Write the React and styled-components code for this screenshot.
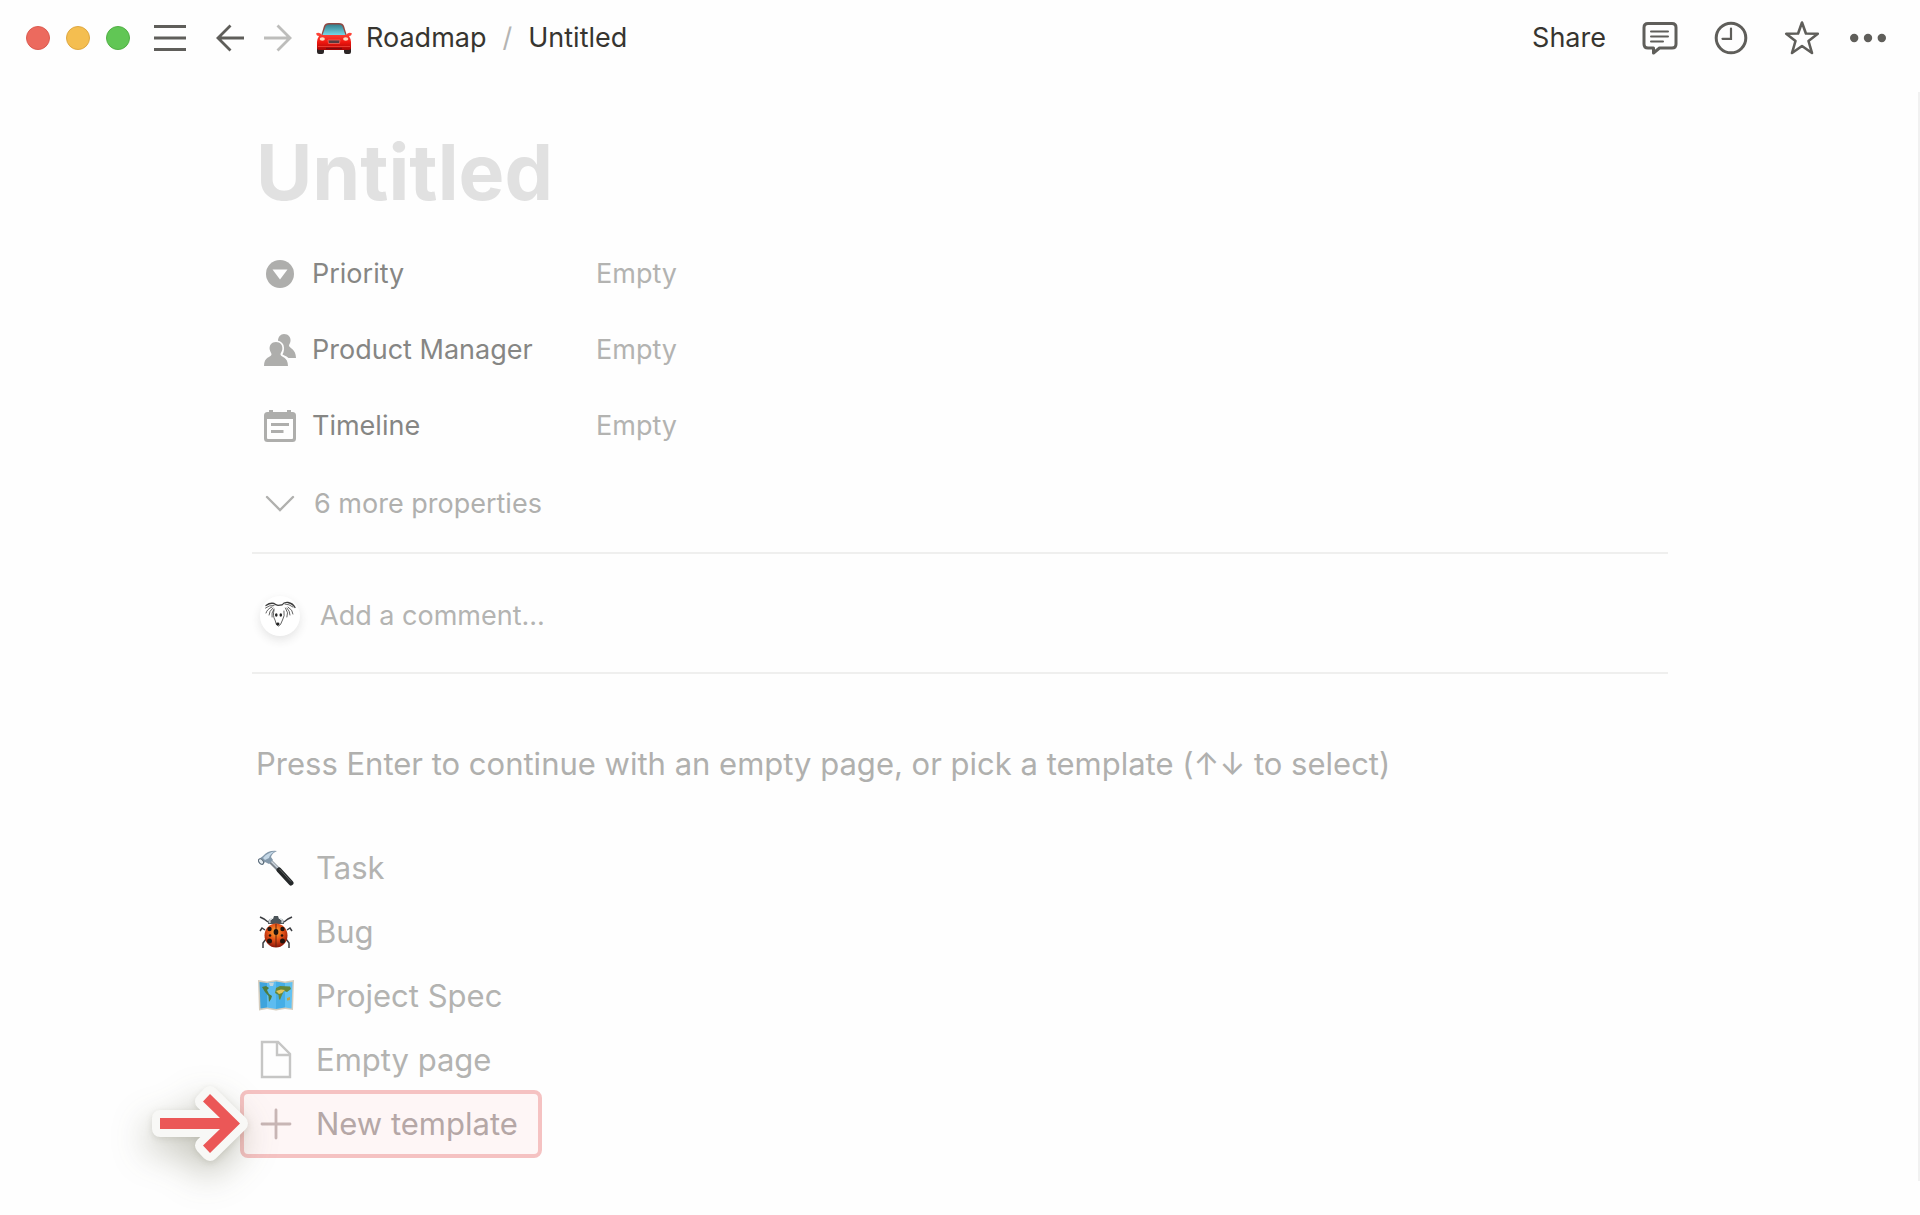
import React from 'react';
import styled, { createGlobalStyle } from 'styled-components';

const GlobalStyle = createGlobalStyle`
    *{ box-sizing: border-box; margin: 0; padding: 0; }

    body{
        background: #fefefe; color: #373530;
        font-family: Inter, "Liberation Sans", sans-serif;
        font-size: 27px; line-height: 36px;
    }

    button, input{ font: inherit; color: inherit; background: none; border: none; }
    button{ cursor: pointer; }
    a{ color: inherit; text-decoration: none; }
    svg{ display: block; flex: none; }
`;

const StyledPage = styled.div`
    min-height: 100vh;
    display: flex; flex-direction: column;
`;

const StyledTopbar = styled.header`
    display: flex; align-items: center;
    justify-content: space-between;
    height: 76px; padding: 0 34px 0 26px;
`;

const WindowControls = styled.div`
    display: flex; gap: 16px;
    margin-right: 24px;
`;

const WindowButton = styled.button`
    width: 24px; height: 24px;
    border-radius: 50%;
    background: ${({$fill}) => $fill};
    border: 1px solid ${({$edge}) => $edge};
`;

const TopbarGroup = styled.div`
    display: flex; align-items: center;
    gap: ${({$gap}) => $gap || 0}px;
`;

const IconButton = styled.button`
    color: ${({$muted}) => $muted ? '#bdbdbb' : '#5f5e5a'};
`;

const NavButtons = styled.div`
    display: flex; gap: 20px;
    margin: 0 24px 0 30px;
`;

const Breadcrumb = styled.nav`
    display: flex; align-items: center;

    a{ display: flex; align-items: center; gap: 14px; }
    span{ color: #b4b4b2; margin: 0 16px; }
`;

const ShareButton = styled.button``;

const StyledMain = styled.main`
    flex: 1;
    margin-top: 16px; margin-bottom: 34px;
    padding: 30px 250px 0 252px;
    border-right: 2px solid #f1f1f1;
`;

const Title = styled.h1`
    font-size: 77px; line-height: 100px; font-weight: 700;
    color: #e1e1e1; padding-left: 4px;
    margin-bottom: 14px;
`;

const PropertyList = styled.div`
    padding: 0 0 8px 12px;
`;

const PropertyRow = styled.div`
    display: flex; align-items: center;
    height: 76px;
`;

const PropertyName = styled.button`
    display: flex; align-items: center; gap: 16px;
    width: 332px; color: #868684; text-align: left;

    svg{ color: #aeaeac; }
`;

const PropertyValue = styled.button`
    color: #b3b3b1;
`;

const MoreButton = styled.button`
    display: flex; align-items: center; gap: 18px;
    height: 80px; color: #b0b0ae;
`;

const CommentRow = styled.label`
    display: flex; align-items: center; gap: 20px;
    height: 122px; padding: 6px 0 0 8px;
    border-top: 2px solid #efefee;
    border-bottom: 2px solid #efefee;

    input{
        flex: 1; outline: none;
        &::placeholder{ color: #b4b4b2; opacity: 1; }
    }
`;

const Avatar = styled.span`
    width: 40px; height: 40px;
    border-radius: 50%; background: #fff;
    box-shadow: 0 4px 10px rgba(50, 50, 50, 0.12);
`;

const Hint = styled.p`
    font-size: 31px; line-height: 40px;
    color: #b0b0ae;
    padding-left: 4px; margin: 70px 0 52px;
`;

const TemplateList = styled.ul`
    list-style: none; font-size: 31px;
    margin-left: -12px;
`;

const TemplateItem = styled.li`
    display: flex; height: 64px;
`;

const TemplateButton = styled.button`
    display: flex; align-items: center; gap: 22px;
    color: #b3b3b1; padding: 0 24px 0 18px;
`;

const HighlightBox = styled.span`
    position: absolute; inset: -2px 0;
    border: 4px solid #f5c2c2; border-radius: 8px;
    background: rgba(255, 90, 90, 0.05);
    pointer-events: none;
`;

const HighlightWrapper = styled.div`
    position: relative; display: flex;

    ${TemplateButton}{ color: #b1abaa; }
`;

const Pointer = styled.svg`
    position: absolute; left: -88px; top: -6px;
    overflow: visible; pointer-events: none;
    filter: drop-shadow(0 2px 3px rgba(70, 70, 40, 0.14)) drop-shadow(-4px 14px 18px rgba(70, 70, 40, 0.32));
`;

const Icon = ({ w = 32, h = 32, children }) => (
    <svg width={w} height={h} viewBox={`0 0 ${w} ${h}`} fill="none" aria-hidden="true">
        {children}
    </svg>
);

const MenuIcon = () => (
    <Icon>
        <path d="M0 4.5H32M0 16H32M0 27.5H32" stroke="currentColor" strokeWidth="3.2" />
    </Icon>
);

const BackIcon = () => (
    <Icon w={28}>
        <path d="M28 16H2M14.5 3.5L2 16L14.5 28.5" stroke="currentColor" strokeWidth="2.8" />
    </Icon>
);

const ForwardIcon = () => (
    <Icon w={28}>
        <path d="M0 16H26M13.5 3.5L26 16L13.5 28.5" stroke="currentColor" strokeWidth="2.8" />
    </Icon>
);

const CarIcon = () => (
    <Icon w={36}>
        <defs>
            <linearGradient id="glass" x1="0" y1="0" x2="0" y2="1">
                <stop stopColor="#347f8c" /><stop offset="1" stopColor="#74d7e6" />
            </linearGradient>
            <linearGradient id="paint" x1="0" y1="0" x2="0" y2="1">
                <stop stopColor="#ff4a3d" /><stop offset=".55" stopColor="#f0170f" /><stop offset="1" stopColor="#a90505" />
            </linearGradient>
        </defs>
        <path d="M1 24H8V30Q8 32 6 32H3Q1 32 1 30ZM28 24H35V30Q35 32 33 32H30Q28 32 28 30Z" fill="#2c2526" />
        <path d="M5 14L8 4Q9 1 13 1H23Q27 1 28 4L31 14Z" fill="#8f4943" />
        <path d="M6.5 13L9.5 4.5Q10.2 2.7 13 2.5H23Q25.8 2.7 26.5 4.5L29.5 13Z" fill="url(#glass)" />
        <path d="M0 11.5Q2 10 4.5 11.5L6 13H30L31.5 11.5Q34 10 36 11.5L35 13.5L33 14Q35 17 35 20V26Q35 28 33 28H3Q1 28 1 26V20Q1 17 3 14L1 13.5Z" fill="url(#paint)" />
        <ellipse cx="6.300" cy="17" rx="2.600" ry="1.800" fill="#ffd9c0" />
        <ellipse cx="29.700" cy="17" rx="2.600" ry="1.800" fill="#ffd9c0" />
        <path d="M12 18H24L23.5 21.500H12.500Z" fill="#563b40" stroke="#f5665a" strokeWidth=".8" />
        <path d="M2 24.500H34" stroke="#ff5a4c" strokeWidth=".6" />
        <path d="M10 26.500H26" stroke="#7c0d10" strokeWidth="1.400" />
    </Icon>
);

const CommentIcon = () => (
    <Icon w={36} h={36}>
        <path d="M6 3.5H30Q34 3.5 34 7.5V24Q34 28 30 28H17.5L11.5 33V28H6Q2 28 2 24V7.5Q2 3.5 6 3.5Z" stroke="currentColor" strokeWidth="3" strokeLinejoin="round" />
        <path d="M9 11.5H26M9 16.5H26M9 21.5H21" stroke="currentColor" strokeWidth="2" strokeLinecap="round" />
    </Icon>
);

const ClockIcon = () => (
    <Icon w={34} h={34}>
        <circle cx="17" cy="17" r="14.8" stroke="currentColor" strokeWidth="3" />
        <path d="M17 7.5V17.8H8.5" stroke="currentColor" strokeWidth="2.2" strokeLinecap="round" />
    </Icon>
);

const StarIcon = () => (
    <Icon w={36} h={36}>
        <path d="M18 2.5L21.9 13.5L33.8 13.8L24.5 21L28 33L18 26L8 33L11.5 21L2.2 13.8L14.1 13.5Z" stroke="currentColor" strokeWidth="2.6" strokeLinejoin="round" />
    </Icon>
);

const DotsIcon = () => (
    <Icon w={36}>
        <circle cx="4.2" cy="16" r="4.2" fill="currentColor" />
        <circle cx="18" cy="16" r="4.2" fill="currentColor" />
        <circle cx="31.8" cy="16" r="4.2" fill="currentColor" />
    </Icon>
);

const SelectIcon = () => (
    <Icon>
        <circle cx="16" cy="16" r="14" fill="currentColor" />
        <path d="M8.5 11.5H23.5L16 21.5Z" fill="#fefefe" />
    </Icon>
);

const PersonIcon = () => (
    <Icon>
        <path d="M20 0C24.5 0 27 3.5 26.5 7C26.3 9 25 10.5 25 11.5C25 14 32 15 32 24H24.5C22 21.5 19.5 21.5 18.5 20.5C20 18 20.500 14 19.500 11C18.500 9 16.500 7.200 14 6.800C14 3 16.500 0 20 0Z" fill="currentColor" />
        <path d="M12 8C16.5 8 19 11.500 18.300 15.500C17.900 17.500 16.500 19 16.500 20.500C17 23.500 24 22.500 24 32H0C0 22.500 7 23.500 7.500 20.500C7.500 19 6.100 17.500 5.700 15.500C5 11.500 7.500 8 12 8Z" fill="currentColor" stroke="#fefefe" strokeWidth="1.500" paintOrder="stroke" />
    </Icon>
);

const DateIcon = () => (
    <Icon>
        <path fillRule="evenodd" d="M5 0H9V2H23V0H27V2H28.5Q32 2 32 5.5V28.5Q32 32 28.5 32H3.5Q0 32 0 28.5V5.5Q0 2 3.5 2H5ZM3 9V28Q3 29 4 29H28Q29 29 29 28V9Z" fill="currentColor" />
        <path d="M7 14.5H25M7 21.5H19.5" stroke="currentColor" strokeWidth="3" />
    </Icon>
);

const ChevronIcon = () => (
    <Icon>
        <path d="M3 9L16 22L29 9" stroke="currentColor" strokeWidth="2.4" strokeLinecap="round" />
    </Icon>
);

const DogIcon = () => (
    <Icon w={40} h={40}>
        <g stroke="#3c3c3c" strokeLinecap="round">
            <path d="M6 9.500Q10 6.500 14 7.500Q15.500 9 18 9.300L22 9Q24 6 28 6.500Q33 7.500 35 11.500" strokeWidth="1.300" />
            <path d="M5.500 12Q9 9 14 9.500M25 8Q29 8 33 11M12 11Q7 13 6 17M13 12Q9 15 9 19M14 13Q11 17 12 21M28 11Q33 14 33 18M27 12Q30 15 30 19M25.500 12Q29 17 27 21" strokeWidth=".8" />
            <path d="M14 14Q12.500 20 15 24Q16 30 18.500 30Q20.500 30 22.500 24Q25 20 24 15" strokeWidth=".8" />
        </g>
        <ellipse cx="16.300" cy="19" rx="1.300" ry="1.800" fill="#222" />
        <ellipse cx="20.800" cy="19" rx="1.300" ry="1.800" fill="#222" />
        <ellipse cx="17.800" cy="28" rx="1.700" ry="1.400" fill="#222" />
    </Icon>
);

const HammerIcon = () => (
    <Icon w={36} h={36}>
        <path d="M12 11L22 21" stroke="#7e868f" strokeWidth="4" />
        <path d="M12.5 10.5L22 20" stroke="#cdd6de" strokeWidth="1.5" />
        <path d="M21 20L33 33" stroke="#252829" strokeWidth="5" strokeLinecap="round" />
        <path d="M21.5 19L33 31.5" stroke="#5e6262" strokeWidth="1" />
        <path d="M1 9L5 6Q10 0 19 1Q14 3 13 7L15 10L11 14L7 12L5 15Q1 15 0 11Z" fill="#8398aa" />
        <path d="M5 8Q10 2 17 1.5Q12 4 11 8L7 10Z" fill="#c4d7e6" />
        <ellipse cx="3" cy="11.5" rx="2" ry="3" transform="rotate(-40 3 11.5)" fill="#e6edf2" stroke="#5d6c79" />
    </Icon>
);

const BugIcon = () => (
    <Icon w={36} h={36}>
        <defs>
            <radialGradient id="shell" cx=".48" cy=".35" r=".65">
                <stop stopColor="#ffac31" /><stop offset=".5" stopColor="#e65318" /><stop offset="1" stopColor="#8c1408" />
            </radialGradient>
        </defs>
        <path d="M10 8L6 5L2 3M26 8L30 5L34 3M7 16L4 14L2 17M29 16L32 14L34 17M8 25L5 29L5 34M28 25L31 29L31 34" stroke="#3c3e42" strokeWidth="1.5" />
        <path d="M10 10Q10 4 15 5L16 2H20L21 5Q26 4 26 10Z" fill="#4c5459" />
        <path d="M12 9Q11 5 14 5M24 9Q25 5 22 5" stroke="#dbe2e4" strokeWidth="1.4" />
        <ellipse cx="18" cy="21.5" rx="11.500" ry="12" fill="url(#shell)" />
        <path d="M18 10V33" stroke="#64200c" strokeWidth="1" />
        <g fill="#21140f">
            <ellipse cx="18" cy="18" rx="2.4" ry="3" />
            <circle cx="11.5" cy="15" r="2.2" /><circle cx="24.5" cy="15" r="2.2" />
            <circle cx="12" cy="21.5" r="1.3" /><circle cx="24" cy="21.5" r="1.3" />
            <circle cx="11.5" cy="27" r="2.5" /><circle cx="24.5" cy="27" r="2.5" />
        </g>
    </Icon>
);

const MapIcon = () => (
    <Icon w={36} h={36}>
        <path d="M0 2L9 3.5L18 2L27 3.5L36 2L35 32L27 31L18 32.5L9 31L1 32.5Z" fill="#d6cdbd" />
        <path d="M1.5 4L9 5L9 29.5L2.5 30.5Z" fill="#3fa4dc" />
        <path d="M9 5L18 3.5V31L9 29.5Z" fill="#5dbcf0" />
        <path d="M18 3.5L27 5V29.5L18 31Z" fill="#45aee6" />
        <path d="M27 5L34.5 4L33.5 30.5L27 29.5Z" fill="#62c2f2" />
        <path d="M4 9L8 8L11 10L9 12L10 14L11 16L14 18L13 21L11 24L10.5 18L7 14Z" fill="#4f7c3c" />
        <path d="M11 5L16 4.5L15 8L12 8Z" fill="#c4d5dc" />
        <path d="M18 10L22 8L32 8.5L33 11L29 14L26 13L24 17L22 22L21 21L20.5 17L17 15Z" fill="#64883b" />
        <path d="M18 13L23 11.500L27 12L24 15L21 16Z" fill="#e0c45b" />
        <path d="M29 20L32 19L32 22L29 22.500Z" fill="#b8a54c" />
    </Icon>
);

const PageIcon = () => (
    <Icon w={36} h={40}>
        <path d="M4 2H20L32 14V37H4Z" stroke="#c6c6c5" strokeWidth="2.4" />
        <path d="M19 2V15H32" stroke="#c6c6c5" strokeWidth="2.4" />
    </Icon>
);

const PlusIcon = () => (
    <Icon w={36} h={36}>
        <path d="M18 4V32M4 18H32" stroke="#c6bbba" strokeWidth="2.8" strokeLinecap="round" />
    </Icon>
);

const arrowPoints = '8,32 68,32 51,15.5 58,8 88,37.5 58,67 51,59.5 68,43 8,43';

const properties = [
    { name: 'Priority', icon: <SelectIcon /> },
    { name: 'Product Manager', icon: <PersonIcon /> },
    { name: 'Timeline', icon: <DateIcon /> },
];

const templates = [
    { name: 'Task', icon: <HammerIcon /> },
    { name: 'Bug', icon: <BugIcon /> },
    { name: 'Project Spec', icon: <MapIcon /> },
    { name: 'Empty page', icon: <PageIcon /> },
];

const Topbar = () => (
    <StyledTopbar>
        <TopbarGroup>
            <WindowControls>
                <WindowButton $fill="#ec6a5e" $edge="#dc5b50" aria-label="Close" />
                <WindowButton $fill="#f4be50" $edge="#dfa841" aria-label="Minimize" />
                <WindowButton $fill="#61c655" $edge="#51b045" aria-label="Zoom" />
            </WindowControls>
            <IconButton aria-label="Menu"><MenuIcon /></IconButton>
            <NavButtons>
                <IconButton aria-label="Back"><BackIcon /></IconButton>
                <IconButton $muted aria-label="Forward"><ForwardIcon /></IconButton>
            </NavButtons>
            <Breadcrumb>
                <a href="#roadmap"><CarIcon />Roadmap</a>
                <span>/</span>
                <a href="#untitled">Untitled</a>
            </Breadcrumb>
        </TopbarGroup>
        <TopbarGroup $gap={30}>
            <TopbarGroup $gap={36}>
                <ShareButton>Share</ShareButton>
                <IconButton aria-label="Comments"><CommentIcon /></IconButton>
                <IconButton aria-label="Updates"><ClockIcon /></IconButton>
                <IconButton aria-label="Favorite"><StarIcon /></IconButton>
            </TopbarGroup>
            <IconButton aria-label="More"><DotsIcon /></IconButton>
        </TopbarGroup>
    </StyledTopbar>
);

const App = () => {
    return (
        <StyledPage>
            <GlobalStyle />
            <Topbar />
            <StyledMain>
                <Title>Untitled</Title>

                <PropertyList>
                    {properties.map(({ name, icon }) => (
                        <PropertyRow key={name}>
                            <PropertyName>{icon}{name}</PropertyName>
                            <PropertyValue>Empty</PropertyValue>
                        </PropertyRow>
                    ))}
                    <MoreButton><ChevronIcon />6 more properties</MoreButton>
                </PropertyList>

                <CommentRow>
                    <Avatar><DogIcon /></Avatar>
                    <input type="text" placeholder="Add a comment..." aria-label="Add a comment" />
                </CommentRow>

                <Hint>Press Enter to continue with an empty page, or pick a template (↑↓ to select)</Hint>

                <TemplateList>
                    {templates.map(({ name, icon }) => (
                        <TemplateItem key={name}>
                            <TemplateButton>{icon}{name}</TemplateButton>
                        </TemplateItem>
                    ))}
                    <TemplateItem>
                        <HighlightWrapper>
                            <TemplateButton><PlusIcon />New template</TemplateButton>
                            <HighlightBox />
                            <Pointer width="96" height="75" viewBox="0 0 96 75" aria-hidden="true">
                                <polygon points={arrowPoints} fill="#f8f8f6" stroke="#f8f8f6" strokeWidth="16" strokeLinejoin="round" />
                                <polygon points={arrowPoints} fill="#eb5757" />
                            </Pointer>
                        </HighlightWrapper>
                    </TemplateItem>
                </TemplateList>
            </StyledMain>
        </StyledPage>
    );
}

export default App;
